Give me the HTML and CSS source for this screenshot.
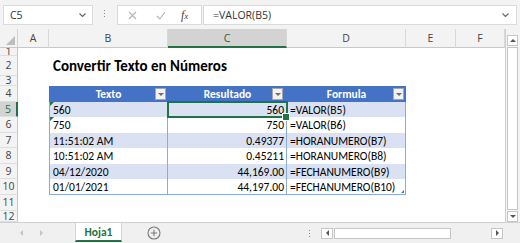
FILE: index.html
```html
<!DOCTYPE html>
<html lang="es">
<head>
  <meta charset="UTF-8" />
  <meta name="viewport" content="width=device-width, initial-scale=1.0"/>
  <title>Convertir Texto en Números</title>
  <link rel="stylesheet" href="styles.css">
</head>
<body>

<div class="app">
  <!-- Formula bar -->
  <div class="formula-bar">
    <div class="name-box">
      <span>C5</span>
      <svg class="chev" width="7" height="4" viewBox="0 0 7 4"><path d="M0.5 0.5 L3.5 3.5 L6.5 0.5" fill="none" stroke="#666" stroke-width="1.1"/></svg>
    </div>
    <div class="grip"><i></i><i></i><i></i></div>
    <div class="fb-actions">
      <svg class="fb-cancel" width="9" height="9" viewBox="0 0 9 9"><path d="M1 1 L8 8 M8 1 L1 8" stroke="#b4b4b4" stroke-width="1.1"/></svg>
      <svg class="fb-enter" width="10" height="9" viewBox="0 0 10 9"><path d="M1 5 L3.8 8 L9 1" fill="none" stroke="#b4b4b4" stroke-width="1.1"/></svg>
      <span class="fx">f<span>x</span></span>
    </div>
    <div class="fb-input">
      <span>=VALOR(B5)</span>
      <svg class="chev" width="7" height="4" viewBox="0 0 7 4"><path d="M0.5 0.5 L3.5 3.5 L6.5 0.5" fill="none" stroke="#666" stroke-width="1.1"/></svg>
    </div>
  </div>

  <!-- Worksheet -->
  <div class="workspace">
    <div class="sheet">
      <div class="corner"></div>
      <div class="ch">A</div>
      <div class="ch">B</div>
      <div class="ch active">C</div>
      <div class="ch">D</div>
      <div class="ch">E</div>
      <div class="ch">F</div>

      <div class="rh">1</div>

      <div class="rh">2</div>
      <div class="title">Convertir Texto en Números</div>

      <div class="rh">3</div>

      <div class="rh">4</div>
      <div class="th col-b"><span>Texto</span><span class="filter"></span></div>
      <div class="th col-c"><span>Resultado</span><span class="filter"></span></div>
      <div class="th col-d"><span>Formula</span><span class="filter"></span></div>

      <div class="rh active">5</div>
      <div class="td col-b band flag">560</div>
      <div class="td col-c band num selected">560</div>
      <div class="td col-d band">=VALOR(B5)</div>

      <div class="rh">6</div>
      <div class="td col-b flag">750</div>
      <div class="td col-c num">750</div>
      <div class="td col-d">=VALOR(B6)</div>

      <div class="rh">7</div>
      <div class="td col-b band">11:51:02 AM</div>
      <div class="td col-c band num">0.49377</div>
      <div class="td col-d band">=HORANUMERO(B7)</div>

      <div class="rh">8</div>
      <div class="td col-b">10:51:02 AM</div>
      <div class="td col-c num">0.45211</div>
      <div class="td col-d">=HORANUMERO(B8)</div>

      <div class="rh">9</div>
      <div class="td col-b band">04/12/2020</div>
      <div class="td col-c band num">44,169.00</div>
      <div class="td col-d band">=FECHANUMERO(B9)</div>

      <div class="rh">10</div>
      <div class="td col-b last">01/01/2021</div>
      <div class="td col-c num last">44,197.00</div>
      <div class="td col-d last resize">=FECHANUMERO(B10)</div>

      <div class="rh">11</div>
      <div class="rh">12</div>
    </div>

    <div class="vscroll">
      <div class="sb-btn"><span class="tri up"></span></div>
      <div class="sb-thumb"></div>
      <div class="sb-btn"><span class="tri down"></span></div>
    </div>
  </div>

  <!-- Sheet tabs -->
  <div class="tabbar">
    <span class="tri left nav"></span>
    <span class="tri right nav"></span>
    <div class="sheet-tab">Hoja1</div>
    <svg class="add-sheet" width="14" height="14" viewBox="0 0 14 14">
      <circle cx="7" cy="7" r="6" fill="none" stroke="#7a7a7a" stroke-width="1.1"/>
      <path d="M7 3.8 V10.2 M3.8 7 H10.2" stroke="#7a7a7a" stroke-width="1.1"/>
    </svg>
    <div class="grip"><i></i><i></i><i></i></div>
    <div class="hscroll">
      <div class="sb-btn"><span class="tri left"></span></div>
      <div class="sb-thumb"></div>
      <div class="sb-track"></div>
      <div class="sb-btn"><span class="tri right"></span></div>
    </div>
  </div>
</div>

</body>
</html>
```

FILE: styles.css
```css
* {
  box-sizing: border-box;
}
body {
  margin: 0;
  width: 520px;
  height: 243px;
  overflow: hidden;
  background-color: #f3f3f3;
  font-family: "Carlito", "Lato", "Liberation Sans", sans-serif;
  color: #000;
}
.app {
  width: 520px;
  height: 243px;
  display: flex;
  flex-direction: column;
}

/* formula bar */
.formula-bar {
  height: 29px;
  display: flex;
  align-items: flex-start;
  padding: 5px 3px 0 3px;
  font-family: "Open Sans", "Noto Sans", sans-serif;
  font-size: 10.5px;
  color: #333;
}
.name-box {
  width: 90px;
  height: 20px;
  background-color: #fff;
  border: 1px solid #dadada;
  display: flex;
  align-items: center;
  justify-content: space-between;
  padding: 0 6px 0 6px;
}
.grip {
  width: 2px;
  margin: 0 11px;
  display: flex;
  flex-direction: column;
  gap: 2px;
  padding-top: 5px;
}
.grip i {
  width: 1px;
  height: 1px;
  background-color: #8a8a8a;
}
.fb-actions {
  width: 85px;
  height: 20px;
  background-color: #fff;
  border: 1px solid #dadada;
  display: flex;
  align-items: center;
  padding-left: 10px;
}
.fb-enter {
  margin-left: 19px;
}
.fx {
  margin-left: 15px;
  font-family: "Liberation Serif", serif;
  font-style: italic;
  font-size: 12px;
  color: #444;
}
.fx span {
  font-size: 9px;
}
.fb-input {
  flex: 1;
  height: 20px;
  margin-left: 1px;
  background-color: #fff;
  border: 1px solid #dadada;
  display: flex;
  align-items: center;
  justify-content: space-between;
  padding: 0 7px 0 9px;
}

/* worksheet grid */
.workspace {
  height: 193px;
  display: flex;
}
.sheet {
  width: 505px;
  display: grid;
  grid-template-columns: 18px 31px 119px 119px 119px 50px 49px;
  grid-template-rows: 19px 8px 20px 10px 16px 15px 16px 15px 16px 15px 16px 16px 11px;
  background-color: #fff;
  overflow: hidden;
}
.corner {
  background-color: #f3f3f3;
  border-right: 1px solid #d4d4d4;
  border-bottom: 1px solid #c8c8c8;
  position: relative;
}
.corner::after {
  content: "";
  position: absolute;
  right: 2px;
  bottom: 2px;
  border-left: 9px solid transparent;
  border-bottom: 9px solid #bdbdbd;
}
.ch {
  background-color: #f3f3f3;
  border-right: 1px solid #d8d8d8;
  border-bottom: 1px solid #c8c8c8;
  display: flex;
  align-items: center;
  justify-content: center;
  font-family: "Open Sans", "Noto Sans", sans-serif;
  font-size: 10.5px;
  color: #444;
}
.ch.active {
  background-color: #d3d3d3;
  border-bottom: 2px solid #217346;
  color: #1f5d3a;
}
.rh {
  grid-column: 1;
  background-color: #f3f3f3;
  border-right: 1px solid #c8c8c8;
  border-bottom: 1px solid #dedede;
  display: flex;
  align-items: center;
  justify-content: center;
  overflow: hidden;
  font-family: "Open Sans", "Noto Sans", sans-serif;
  font-size: 10.5px;
  line-height: 1;
  color: #444;
}
.rh.active {
  background-color: #d3d3d3;
  border-right: 2px solid #217346;
  color: #217346;
}
.col-b {
  grid-column: 3;
}
.col-c {
  grid-column: 4;
}
.col-d {
  grid-column: 5;
}

.title {
  grid-column: 3 / span 3;
  display: flex;
  align-items: center;
  padding-left: 4px;
  font-size: 15px;
  font-weight: bold;
  white-space: nowrap;
}

/* table */
.th {
  background-color: #4472c4;
  color: #fff;
  font-weight: bold;
  font-size: 11.5px;
  display: flex;
  align-items: center;
  justify-content: center;
  position: relative;
}
.filter {
  position: absolute;
  right: 2px;
  top: 2px;
  width: 11px;
  height: 12px;
  background-color: #f2f2f2;
  border: 1px solid #a6a6a6;
}
.filter::after {
  content: "";
  position: absolute;
  left: 2px;
  top: 4px;
  border-left: 3px solid transparent;
  border-right: 3px solid transparent;
  border-top: 3px solid #6d6d6d;
}
.col-c .filter {
  right: 4px;
}
.td {
  display: flex;
  align-items: center;
  padding: 0 3px;
  font-size: 11.5px;
  white-space: nowrap;
  border-right: 1px solid #8ea9db;
  position: relative;
}
.td.col-b {
  border-left: 1px solid #8ea9db;
}
.td.band {
  background-color: #d9e1f2;
}
.td.num {
  justify-content: flex-end;
  padding-right: 2px;
}
.td.last {
  border-bottom: 1px solid #8ea9db;
}
.td.flag::before {
  content: "";
  position: absolute;
  left: 0;
  top: 0;
  border-top: 4px solid #1e7145;
  border-right: 4px solid transparent;
}
.td.selected {
  outline: 2px solid #217346;
  outline-offset: -1px;
  z-index: 1;
}
.td.selected::after {
  content: "";
  position: absolute;
  right: -4px;
  bottom: -4px;
  width: 6px;
  height: 6px;
  background-color: #217346;
  border: 1px solid #fff;
}
.td.resize::after {
  content: "";
  position: absolute;
  right: 1px;
  bottom: 1px;
  border-left: 3px solid transparent;
  border-bottom: 3px solid #4472c4;
}

/* scrollbars */
.vscroll {
  width: 15px;
  border-left: 1px solid #d0d0d0;
  display: flex;
  flex-direction: column;
  padding: 6px 2px 0 1px;
}
.sb-btn {
  background-color: #fff;
  border: 1px solid #c6c6c6;
  display: flex;
  align-items: center;
  justify-content: center;
}
.vscroll .sb-btn {
  height: 11px;
}
.sb-thumb {
  background-color: #fff;
  border: 1px solid #c6c6c6;
}
.vscroll .sb-thumb {
  flex: 1;
  margin: 1px 0;
}
.tri {
  width: 0;
  height: 0;
}
.tri.up {
  border-left: 3px solid transparent;
  border-right: 3px solid transparent;
  border-bottom: 3px solid #555;
}
.tri.down {
  border-left: 3px solid transparent;
  border-right: 3px solid transparent;
  border-top: 3px solid #555;
}
.tri.left {
  border-top: 3px solid transparent;
  border-bottom: 3px solid transparent;
  border-right: 3px solid #555;
}
.tri.right {
  border-top: 3px solid transparent;
  border-bottom: 3px solid transparent;
  border-left: 3px solid #555;
}

/* sheet tabs */
.tabbar {
  height: 21px;
  border-top: 1px solid #d0d0d0;
  background-color: #f0f0f0;
  display: flex;
  align-items: center;
  padding-left: 20px;
}
.tri.nav {
  border-top-width: 3.5px;
  border-bottom-width: 3.5px;
  border-left-color: #c4c4c4;
  border-right-color: #c4c4c4;
}
.tri.right.nav {
  margin-left: 17px;
}
.sheet-tab {
  align-self: stretch;
  width: 47px;
  margin-left: 32px;
  margin-bottom: 1px;
  background-color: #fff;
  border-left: 1px solid #d4d4d4;
  border-right: 1px solid #d4d4d4;
  border-bottom: 2px solid #217346;
  display: flex;
  align-items: center;
  justify-content: center;
  font-size: 11.5px;
  font-weight: bold;
  color: #217346;
}
.add-sheet {
  margin-left: 25px;
}
.tabbar .grip {
  margin: 0 10px 0 148px;
  padding-top: 0;
}
.hscroll {
  width: 182px;
  height: 11px;
  display: flex;
}
.hscroll .sb-btn {
  width: 12px;
}
.hscroll .sb-thumb {
  width: 117px;
  margin: 0 1px;
}
.sb-track {
  flex: 1;
}
```
